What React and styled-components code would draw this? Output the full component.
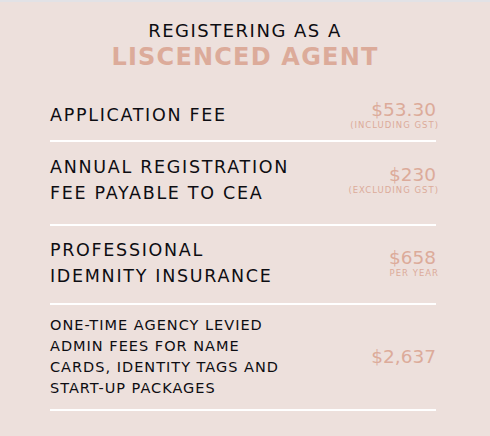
import React from "react";
import styled, { createGlobalStyle } from "styled-components";

const Global = createGlobalStyle`
  html, body { margin: 0; padding: 0; }
  body {
    background: #ede0dc;
    font-family: "DejaVu Sans", "Liberation Sans", sans-serif;
    color: #0d0d12;
  }
`;

const Page = styled.div`
  width: 490px;
  height: 436px;
  box-sizing: border-box;
  border-top: 2px solid #e2e2e6;
  background: #ede0dc;
  overflow: hidden;
`;

const Header = styled.header`
  display: flex;
  flex-direction: column;
  align-items: center;
  padding-top: 18px;
  height: 88px;
  box-sizing: border-box;
`;

const Kicker = styled.div`
  font-size: 18px;
  line-height: 22px;
  letter-spacing: 1.5px;
`;

const Title = styled.h1`
  margin: 0;
  font-size: 24px;
  line-height: 30px;
  font-weight: 700;
  letter-spacing: 1.2px;
  color: #dcab9a;
`;

const List = styled.div`
  margin: 0 54px 0 50px;
  display: flex;
  flex-direction: column;
`;

const Row = styled.div`
  display: flex;
  align-items: center;
  justify-content: space-between;
  box-sizing: border-box;
  height: ${(p) => p.$h}px;
  padding-bottom: ${(p) => p.$shift}px;
  border-bottom: 2px solid #ffffff;
`;

const Label = styled.div`
  font-size: ${(p) => (p.$small ? "14.5px" : "17.5px")};
  line-height: ${(p) => (p.$small ? "21px" : "26px")};
  letter-spacing: ${(p) => (p.$small ? "1px" : "1.7px")};
  text-transform: uppercase;
  white-space: nowrap;
`;

const Price = styled.div`
  display: flex;
  flex-direction: column;
  align-items: flex-end;
  color: #dcab9a;
`;

const Amount = styled.div`
  font-size: 18.5px;
  line-height: 20px;
`;

const Note = styled.div`
  font-size: 8.5px;
  line-height: 10px;
  letter-spacing: 1px;
  margin-right: -3px;
`;

const rows = [
  { label: ["Application Fee"], amount: "$53.30", note: "(Including GST)", h: 52, shift: 0 },
  { label: ["Annual Registration", "Fee Payable to CEA"], amount: "$230", note: "(Excluding GST)", h: 84, shift: 6 },
  { label: ["Professional", "Idemnity Insurance"], amount: "$658", note: "Per Year", h: 79, shift: 4 },
  {
    label: ["One-Time Agency Levied", "Admin Fees for Name", "Cards, Identity Tags and", "Start-Up Packages"],
    amount: "$2,637",
    h: 106,
    shift: 1,
    small: true,
  },
];

export default function App() {
  return (
    <Page>
      <Global />
      <Header>
        <Kicker>REGISTERING AS A</Kicker>
        <Title>LISCENCED AGENT</Title>
      </Header>
      <List>
        {rows.map((r) => (
          <Row key={r.amount} $h={r.h} $shift={r.shift}>
            <Label $small={r.small}>
              {r.label.map((l) => (
                <div key={l}>{l}</div>
              ))}
            </Label>
            <Price>
              <Amount>{r.amount}</Amount>
              {r.note && <Note>{r.note.toUpperCase()}</Note>}
            </Price>
          </Row>
        ))}
      </List>
    </Page>
  );
}
